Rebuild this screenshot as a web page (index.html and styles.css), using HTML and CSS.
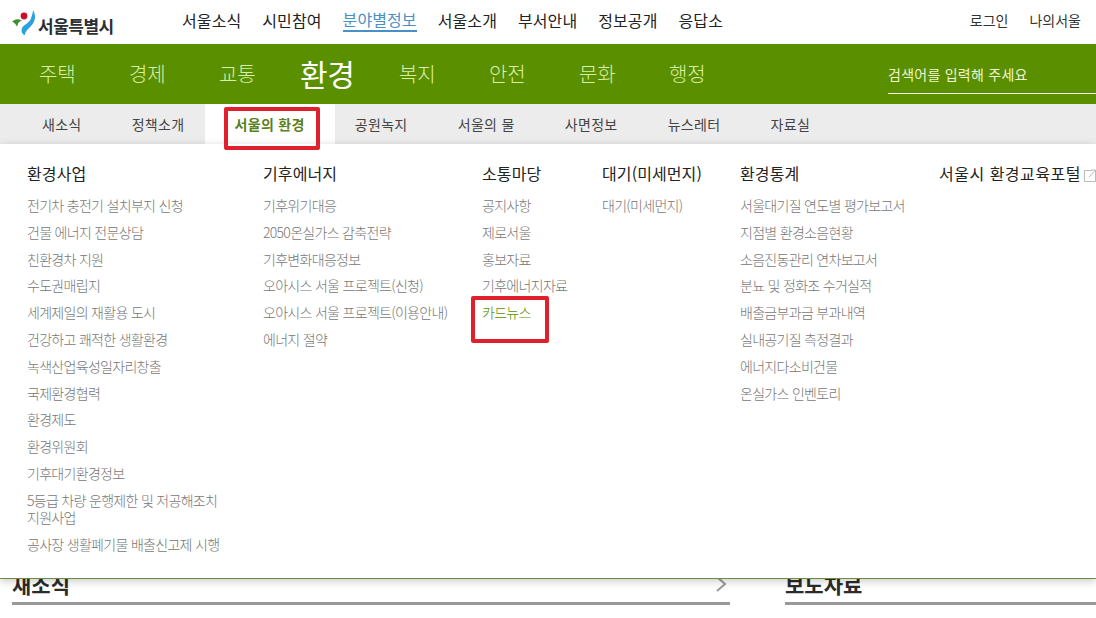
FILE: index.html
```html
<!DOCTYPE html>
<html lang="ko">
<head>
<meta charset="utf-8">
<title>서울특별시 환경</title>
<link rel="stylesheet" href="styles.css">
</head>
<body>
<header class="top">
  <a class="logo">
    <svg class="logo-mark" width="26" height="28" viewBox="0 0 26 28">
      <path d="M21 1C24 6 24 12 19 17 15 21 13 23 13 26 10 26 9 22 10 19 12 15 18 14 19 9 20 6 21 4 21 1z" fill="#2aa3dc"/>
      <circle cx="12" cy="7" r="3.400" fill="#c8102e"/>
      <path d="M0 13C2 10 7 9 10 12 7 12 6 14 5 18 4 15 2 13 0 13z" fill="#3f8f2e"/>
    </svg>
    <span class="logo-text">서울특별시</span>
  </a>
  <nav class="gnb">
    <a>서울소식</a><a>시민참여</a><a class="on">분야별정보</a><a>서울소개</a><a>부서안내</a><a>정보공개</a><a>응답소</a>
  </nav>
  <div class="util"><a>로그인</a><a>나의서울</a></div>
</header>
<div class="green">
  <nav class="fields">
    <a>주택</a><a>경제</a><a>교통</a><a class="big">환경</a><a>복지</a><a>안전</a><a>문화</a><a>행정</a>
  </nav>
  <div class="search">검색어를 입력해 주세요</div>
</div>
<nav class="sub">
  <a>새소식</a><a>정책소개</a><a class="active">서울의 환경</a><a>공원녹지</a><a>서울의 물</a><a>사면정보</a><a>뉴스레터</a><a>자료실</a>
</nav>
<div class="stage">
  <div class="mega">
    <section class="col">
      <h3>환경사업</h3>
      <ul>
        <li>전기차 충전기 설치부지 신청</li><li>건물 에너지 전문상담</li><li>친환경차 지원</li><li>수도권매립지</li><li>세계제일의 재활용 도시</li><li>건강하고 쾌적한 생활환경</li><li>녹색산업육성일자리창출</li><li>국제환경협력</li><li>환경제도</li><li>환경위원회</li><li>기후대기환경정보</li><li>5등급 차량 운행제한 및 저공해조치 지원사업</li><li>공사장 생활폐기물 배출신고제 시행</li>
      </ul>
    </section>
    <section class="col">
      <h3>기후에너지</h3>
      <ul>
        <li>기후위기대응</li><li>2050온실가스 감축전략</li><li>기후변화대응정보</li><li>오아시스 서울 프로젝트(신청)</li><li>오아시스 서울 프로젝트(이용안내)</li><li>에너지 절약</li>
      </ul>
    </section>
    <section class="col">
      <h3>소통마당</h3>
      <ul>
        <li>공지사항</li><li>제로서울</li><li>홍보자료</li><li>기후에너지자료</li><li class="sel">카드뉴스</li>
      </ul>
    </section>
    <section class="col">
      <h3>대기(미세먼지)</h3>
      <ul><li>대기(미세먼지)</li></ul>
    </section>
    <section class="col">
      <h3>환경통계</h3>
      <ul>
        <li>서울대기질 연도별 평가보고서</li><li>지점별 환경소음현황</li><li>소음진동관리 연차보고서</li><li>분뇨 및 정화조 수거실적</li><li>배출금부과금 부과내역</li><li>실내공기질 측정결과</li><li>에너지다소비건물</li><li>온실가스 인벤토리</li>
      </ul>
    </section>
    <section class="col">
      <h3 class="portal">서울시 환경교육포털<svg class="ext" width="12" height="13" viewBox="0 0 12 13"><path d="M8 1.500H.5v11h11V5M5 8l6.500-7M7.500 1h4v4" fill="none" stroke="#bbb"/></svg></h3>
    </section>
  </div>
  <div class="mark mark-tab"></div>
  <div class="mark mark-card"></div>
  <main class="content">
    <section class="panel news">
      <h2>새소식</h2>
      <svg class="chev" width="12" height="16" viewBox="0 0 12 16"><path d="M2 1l8 7-8 7" fill="none" stroke="#999" stroke-width="2"/></svg>
    </section>
    <section class="panel press"><h2>보도자료</h2></section>
  </main>
</div>
</body>
</html>
```
FILE: styles.css
```css
* { box-sizing: border-box; }
html, body { margin: 0; padding: 0; height: 618px; overflow: hidden; background: #fff; }
body { font-family: "Noto Sans CJK KR", "Noto Sans", sans-serif; color: #333; }
ul { list-style: none; margin: 0; padding: 0; }
h2, h3 { margin: 0; }

.top { height: 44px; display: flex; align-items: center; padding-left: 12px; }
.logo { width: 170px; display: flex; align-items: flex-end; height: 32px; }
.logo-mark { flex: none; margin-bottom: 1px; }
.logo-text { font-size: 17px; font-weight: 700; letter-spacing: -0.5px; color: #2b2f33; line-height: 24px; }
.gnb { display: flex; gap: 21px; font-size: 16px; letter-spacing: 0.1px; line-height: 24px; color: #222; margin-top: -4px; }
.gnb .on { color: #4a90c6; border-bottom: 2px solid #4a90c6; line-height: 22px; height: 24px; }
.util { margin-left: auto; display: flex; gap: 21px; padding-right: 15px; font-size: 14px; color: #333; margin-top: -4px; line-height: 22px; }

.green { height: 60px; background: #5a8f00; display: flex; align-items: center; padding-left: 39px; }
.fields { display: flex; align-items: center; gap: 53.600px; font-size: 20px; letter-spacing: -0.2px; font-weight: 300; color: #d9f0a8; line-height: 30px; width: 849px; }
.fields .big { font-size: 30px; letter-spacing: -0.4px; font-weight: 400; color: #fff; line-height: 40px; margin: -2px -9px 0; }
.search { flex: 1; height: 34px; margin-top: 6px; border-bottom: 1px solid #f4f8e8; color: #eef7d2; font-size: 14px; letter-spacing: 0.25px; line-height: 28px; }

.sub { height: 40px; background: #ececec; display: flex; align-items: center; padding-left: 42px; gap: 50.150px; font-size: 14px; letter-spacing: 0.3px; line-height: 40px; color: #444; }
.sub .active { background: #fff; color: #5a7f1c; font-weight: 700; margin: 0 -30px; padding: 0 30px; height: 40px; }

.stage { position: relative; height: 474px; }
.mega { position: absolute; z-index: 2; top: 0; left: 0; right: 0; height: 435px; background: #fff; border-bottom: 1px solid #6b8e3a; box-shadow: 0 2px 8px rgba(0,0,0,.22); padding: 18px 0 0 27px; display: grid; grid-template-columns: 236px 219px 120px 138px 199px 1fr; overflow: hidden; }
.col h3 { font-size: 16px; letter-spacing: 0.1px; font-weight: 400; line-height: 22px; color: #222; margin-bottom: 13px; white-space: nowrap; }
.col li { font-size: 14px; letter-spacing: -0.7px; font-weight: 300; line-height: 17px; color: #777; margin-bottom: 9.800px; max-width: 200px; }
.col li.sel { color: #5a8f00; }
.col h3.portal { letter-spacing: 0.5px; }
.portal .ext { margin-left: 3px; vertical-align: -2px; }

.mark { position: absolute; z-index: 3; border: 4px solid #e0202c; border-radius: 2px; }
.mark-tab { left: 224px; top: -37px; width: 96px; height: 43px; }
.mark-card { left: 471px; top: 152px; width: 78px; height: 47px; }

.content { position: absolute; top: 424px; left: 12px; right: 0; display: flex; gap: 55px; }
.panel { border-bottom: 3px solid #999; height: 37px; position: relative; }
.panel h2 { font-size: 21px; font-weight: 700; color: #2b2b2b; line-height: 32px; }
.news { width: 718px; }
.press { flex: 1; }
.chev { position: absolute; right: 3px; top: 8px; }
```
